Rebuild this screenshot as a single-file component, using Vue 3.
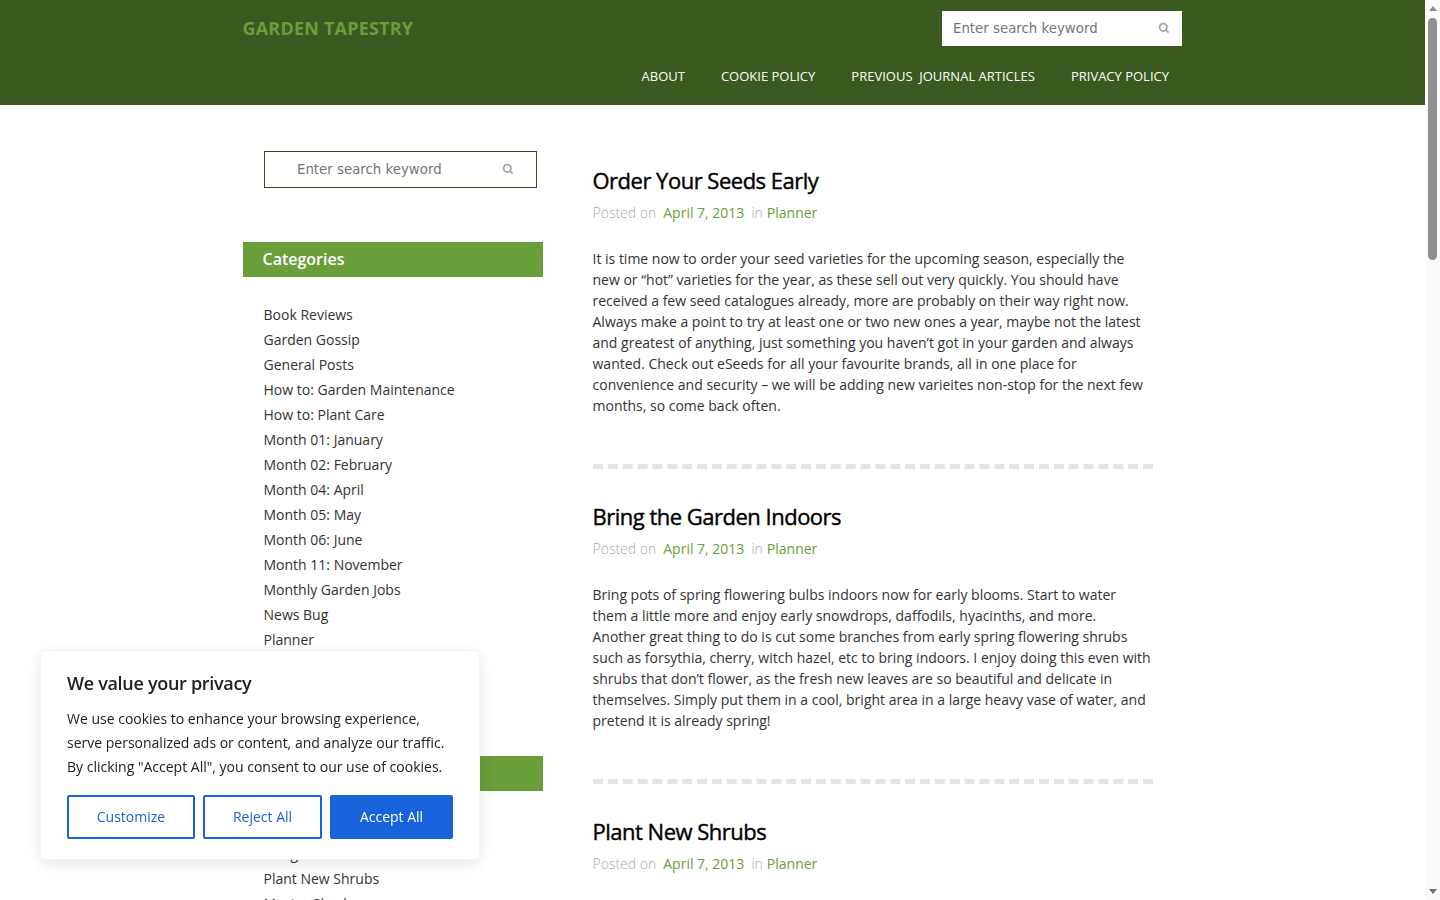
<script setup>
const navLinks = ['ABOUT', 'COOKIE POLICY', 'PREVIOUS  JOURNAL ARTICLES', 'PRIVACY POLICY']

const categories = [
  'Book Reviews', 'Garden Gossip', 'General Posts', 'How to: Garden Maintenance', 'How to: Plant Care',
  'Month 01: January', 'Month 02: February', 'Month 04: April', 'Month 05: May', 'Month 06: June',
  'Month 11: November', 'Monthly Garden Jobs', 'News Bug', 'Planner', 'Plant Profiles', 'Uncategorized'
]

const recentPosts = ['Order Your Seeds Early', 'Bring the Garden Indoors', 'Plant New Shrubs', 'Master Shrubs']

const posts = [
  {
    title: 'Order Your Seeds Early',
    body: 'It is time now to order your seed varieties for the upcoming season, especially the new or “hot” varieties for the year, as these sell out very quickly. You should have received a few seed catalogues already, more are probably on their way right now. Always make a point to try at least one or two new ones a year, maybe not the latest and greatest of anything, just something you haven’t got in your garden and always wanted. Check out eSeeds for all your favourite brands, all in one place for convenience and security – we will be adding new varieites non-stop for the next few months, so come back often.'
  },
  {
    title: 'Bring the Garden Indoors',
    body: 'Bring pots of spring flowering bulbs indoors now for early blooms. Start to water them a little more and enjoy early snowdrops, daffodils, hyacinths, and more. Another great thing to do is cut some branches from early spring flowering shrubs such as forsythia, cherry, witch hazel, etc to bring indoors. I enjoy doing this even with shrubs that don’t flower, as the fresh new leaves are so beautiful and delicate in themselves. Simply put them in a cool, bright area in a large heavy vase of water, and pretend it is already spring!'
  },
  {
    title: 'Plant New Shrubs',
    body: 'Now is a good time to plant new shrubs in the garden, as soon as the ground can be worked. Dig a wide hole and water well after planting.'
  }
]
</script>

<template>
  <div class="page">
    <header class="site-header">
      <div class="header-inner">
        <div class="header-top">
          <a class="site-title">GARDEN TAPESTRY</a>
          <div class="header-search">
            <span class="placeholder">Enter search keyword</span>
            <svg class="search-icon" width="12" height="12" viewBox="0 0 12 12" fill="none">
              <circle cx="5.3" cy="5.3" r="3.7" stroke="#a8a8a8" stroke-width="1.8" />
              <path d="M8 8l2.6 2.6" stroke="#a8a8a8" stroke-width="1.8" />
            </svg>
          </div>
        </div>
        <nav class="main-nav">
          <a v-for="link in navLinks" :key="link">{{ link }}</a>
        </nav>
      </div>
    </header>

    <div class="content">
      <aside class="sidebar">
        <div class="side-search">
          <span class="placeholder">Enter search keyword</span>
          <svg class="search-icon" width="12" height="12" viewBox="0 0 12 12" fill="none">
            <circle cx="5.3" cy="5.3" r="3.7" stroke="#a8a8a8" stroke-width="1.8" />
            <path d="M8 8l2.6 2.6" stroke="#a8a8a8" stroke-width="1.8" />
          </svg>
        </div>

        <h3 class="widget-title">Categories</h3>
        <ul class="widget-list">
          <li v-for="item in categories" :key="item">{{ item }}</li>
        </ul>

        <h3 class="widget-title">Recent Posts</h3>
        <ul class="widget-list">
          <li v-for="item in recentPosts" :key="item">{{ item }}</li>
        </ul>
      </aside>

      <main class="posts">
        <article v-for="post in posts" :key="post.title" class="post">
          <h2 class="post-title">{{ post.title }}</h2>
          <p class="post-meta">
            <span class="meta-label">Posted on</span>
            <a class="meta-date">April 7, 2013</a>
            <span class="meta-in">in</span>
            <a class="meta-cat">Planner</a>
          </p>
          <p class="post-body">{{ post.body }}</p>
        </article>
      </main>
    </div>

    <div class="cookie-box">
      <h4 class="cookie-title">We value your privacy</h4>
      <p class="cookie-text">We use cookies to enhance your browsing experience, serve personalized ads or content, and analyze our traffic. By clicking "Accept All", you consent to our use of cookies.</p>
      <div class="cookie-buttons">
        <button class="btn btn-customize">Customize</button>
        <button class="btn btn-reject">Reject All</button>
        <button class="btn btn-accept">Accept All</button>
      </div>
    </div>

    <div class="scrollbar">
      <span class="arrow arrow-up"></span>
      <div class="track">
        <div class="thumb"></div>
      </div>
      <span class="arrow arrow-down"></span>
    </div>
  </div>
</template>

<style>
body {
  margin: 0;
}
</style>

<style scoped>
.page {
  font-family: 'Open Sans', sans-serif;
  font-size: 14px;
  color: #333;
  min-height: 3235px;
  background: #fff;
}
.site-header {
  background: #3a5a1f;
  height: 105px;
  margin-right: 15px;
}
.header-inner {
  width: 940px;
  margin-left: 242px;
  padding-top: 11px;
}
.header-top {
  display: flex;
  justify-content: space-between;
  align-items: center;
}
.site-title {
  color: #699e3b;
  font-size: 18px;
  font-weight: 700;
  letter-spacing: 0.2px;
  margin-left: 0.5px;
  position: relative;
  top: -1px;
}
.header-search {
  width: 240px;
  height: 35px;
  background: #fff;
  display: flex;
  align-items: center;
  justify-content: space-between;
  box-sizing: border-box;
  padding: 0 12px 0 11px;
}
.placeholder {
  color: #757575;
  font-family: 'DejaVu Sans', sans-serif;
  font-size: 13.333px;
  line-height: 18px;
}
.search-icon {
  display: block;
  margin-top: -1px;
}
.main-nav {
  display: flex;
  justify-content: flex-end;
  gap: 36px;
  padding: 21px 13px 0 0;
  color: #fff;
  font-size: 13px;
  line-height: 18px;
  white-space: pre;
}
.content {
  display: flex;
  margin-left: 243px;
  padding-top: 46px;
}
.sidebar {
  width: 300px;
  flex-shrink: 0;
}
.side-search {
  width: 273px;
  height: 37px;
  margin-left: 21px;
  box-sizing: border-box;
  border: 1px solid #3a4a20;
  display: flex;
  align-items: center;
  justify-content: space-between;
  padding: 0 22px 0 32px;
}
.widget-title {
  margin: 54px 0 0;
  height: 35px;
  line-height: 35px;
  padding-left: 19.5px;
  background: #699e3b;
  color: #fff;
  font-size: 16px;
  font-weight: 600;
}
.widget-list {
  list-style: none;
  margin: 0;
  padding: 25px 0 0 20.5px;
}
.widget-list li {
  height: 25px;
  line-height: 25px;
}
.posts {
  width: 560.5px;
  margin-left: 49.5px;
  padding-top: 14px;
}
.post {
  border-bottom: 5px dashed #e4e4e4;
  padding-bottom: 48px;
  margin-bottom: 32px;
}
.post-title {
  margin: 0;
  color: #000;
  font-size: 22px;
  font-weight: 400;
  line-height: 30px;
  letter-spacing: -0.5px;
  -webkit-text-stroke: 0.4px #000;
}
.post-meta {
  margin: 8px 0 0;
  line-height: 20px;
  display: flex;
}
.meta-label {
  color: #aaa;
  font-weight: 300;
}
.meta-date {
  color: #699e3b;
  margin-left: 7px;
}
.meta-in {
  color: #aaa;
  font-weight: 300;
  margin-left: 7px;
}
.meta-cat {
  color: #699e3b;
  margin-left: 4px;
}
.post-body {
  margin: 25px 0 0;
  line-height: 21px;
  width: 560px;
}
.cookie-box {
  position: fixed;
  left: 40px;
  bottom: 40px;
  width: 440px;
  height: 210px;
  box-sizing: border-box;
  padding: 20px 26px;
  background: #fff;
  border-radius: 6px;
  border: 1px solid #f4f4f4;
  box-shadow: 0 4px 14px rgba(0, 0, 0, 0.1);
}
.cookie-title {
  margin: 0;
  font-size: 18px;
  font-weight: 600;
  color: #212121;
  line-height: 24px;
  letter-spacing: -0.3px;
}
.cookie-text {
  margin: 12px 0 0;
  font-size: 14px;
  line-height: 24px;
  color: #212121;
}
.cookie-buttons {
  display: flex;
  gap: 8px;
  margin-top: 16px;
}
.btn {
  height: 44px;
  padding: 0 0 2px;
  border-radius: 2px;
  border: 2px solid #1863dc;
  font-family: 'Open Sans', sans-serif;
  font-size: 14px;
  cursor: pointer;
}
.btn-customize {
  width: 128px;
  background: #fff;
  color: #1863dc;
}
.btn-reject {
  width: 119px;
  background: #fff;
  color: #1863dc;
}
.btn-accept {
  width: 123px;
  background: #1863dc;
  color: #fff;
}
.scrollbar {
  position: fixed;
  top: 0;
  right: 0;
  bottom: 0;
  width: 15px;
  background: #fafafa;
  display: flex;
  flex-direction: column;
  align-items: center;
}
.arrow {
  flex-shrink: 0;
  width: 0;
  height: 0;
  margin: 6px 0;
  border-left: 4px solid transparent;
  border-right: 4px solid transparent;
}
.arrow-up {
  border-bottom: 5px solid #8a8a8a;
}
.arrow-down {
  border-top: 5px solid #6e6e6e;
}
.track {
  flex: 1;
  width: 100%;
}
.thumb {
  width: 9px;
  height: 242px;
  margin: 1px 0 0 3px;
  border-radius: 5px;
  background: #8f8f8f;
}
</style>
